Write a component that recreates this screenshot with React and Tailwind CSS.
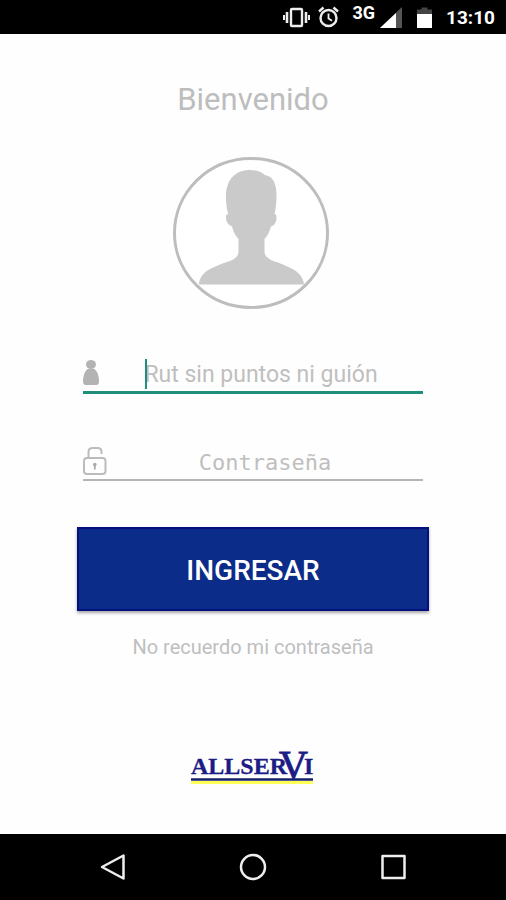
import React from "react";

function StatusBar() {
  return (
    <header className="flex h-[34px] items-center justify-end bg-black pr-[11px] text-white">
      <svg className="mr-[6px] h-[22px] w-[28px]" viewBox="0 0 28 22" fill="none" stroke="#eee" aria-hidden="true">
        <rect x="8" y="3" width="11" height="17" rx="1" strokeWidth="2.4" />
        <path d="M4 6v11M23 6v11" strokeWidth="2.600" />
        <path d="M1 9v5M26 9v5" strokeWidth="2" />
      </svg>
      <svg className="mr-[13px] h-[22px] w-[22px]" viewBox="0 0 22 22" fill="none" stroke="#eee" aria-hidden="true">
        <circle cx="11.500" cy="12" r="8" strokeWidth="2.4" />
        <path d="M11.500 7.500v5l3.500 2.200" strokeWidth="1.800" />
        <path d="M2 5.500l4.500-4M21 5.500l-4.500-4" strokeWidth="2.400" />
      </svg>
      <span className="mr-[5px] self-start pt-[3px] font-['Roboto',sans-serif] text-[18px] font-bold leading-[20px]">3G</span>
      <svg className="mr-[15px] h-[22px] w-[22px]" viewBox="0 0 22 22" aria-hidden="true">
        <path d="M22 1v21H0z" fill="#555" />
        <path d="M16 7V22H0z" fill="#fff" />
      </svg>
      <svg className="mr-[14px] h-[22px] w-[15px]" viewBox="0 0 15 22" aria-hidden="true">
        <path d="M4.500 1.500h6v2H15V8H0V3.500h4.500z" fill="#444" />
        <path d="M0 8h15v14H0z" fill="#fff" />
      </svg>
      <span className="pt-[2px] font-['Roboto',sans-serif] text-[19px] font-bold leading-[24px]">13:10</span>
    </header>
  );
}

function Avatar() {
  return (
    <svg className="mr-[4px] mt-[36px] h-[154px] w-[158px]" viewBox="0 0 158 154" role="img" aria-label="Usuario">
      <ellipse cx="79" cy="77" rx="76.500" ry="74.500" fill="#fff" stroke="#bdbdbd" strokeWidth="3" />
      <path
        d="M27 128.500c0-7 5-13 13-16.500 5-2.500 12-5 18-7 5-2 8.500-5 8.500-9V83c-3-3-5-7-6.500-12.500-4-1.500-6-5-6-9.500 0-2 .8-3 2.300-3-1.800-5-2.300-12-2.300-18 0-16 9-26 24-26 6 0 11 1.500 15 5 9 1.500 11.500 10 11.500 21 0 6-.5 12-2 18 1.500 0 2 1.500 2 3.500 0 4.500-2 8-5.500 9-1.500 5.500-3.500 9.500-6.500 12.500v13c0 4 4 7 9 9 6 2 12 4.500 17 7 8 3.500 13 9.500 13.500 16.500z"
        fill="#cacaca"
      />
    </svg>
  );
}

function PersonIcon() {
  return (
    <svg className="h-[28px] w-[16px] shrink-0" viewBox="0 0 16 28" fill="#b3b3b3" aria-hidden="true">
      <ellipse cx="8" cy="5.500" rx="5" ry="4.500" />
      <path d="M4.500 10h7c3 2.500 4.500 7 4.500 12 0 3-1 4-3 4H3c-2 0-3-1-3-4 0-5 1.500-9.500 4.500-12z" />
    </svg>
  );
}

function PadlockIcon() {
  return (
    <svg className="h-[30px] w-[24px] shrink-0" viewBox="0 0 24 30" fill="none" stroke="#bcbcbc" strokeWidth="2" aria-hidden="true">
      <rect x="1" y="12" width="21.500" height="16" rx="3" />
      <path d="M5.500 12V6c0-2.500 1.500-4 4-4h5c2.500 0 4 1.500 4 4v2" />
      <circle cx="11.800" cy="18.500" r="1.800" fill="#aaa" stroke="none" />
      <path d="M11.800 18.500v5" stroke="#aaa" strokeWidth="1.800" />
    </svg>
  );
}

function Logo() {
  return (
    <svg
      className="h-[50px] w-[150px] font-['Liberation_Serif',serif]"
      viewBox="0 0 150 50"
      role="img"
      aria-label="ALLSERVI"
    >
      <path d="M13 40.500h122" stroke="#ffff55" strokeWidth="3" />
      <path d="M13 37.500h122" stroke="#17206b" strokeWidth="2.500" />
      <g fill="#1c1c86" stroke="#1c1c86">
        <text x="13" y="32" fontSize="24" fontWeight="700" strokeWidth="0.300">ALLSER</text>
        <text x="101" y="36" fontSize="40" strokeWidth="0.900">V</text>
        <text x="126" y="32" fontSize="24" fontWeight="700" strokeWidth="0.300">I</text>
      </g>
    </svg>
  );
}

function NavigationBar() {
  return (
    <nav className="flex h-[66px] items-center justify-center gap-[112px] bg-black" aria-label="Sistema">
      <button type="button" aria-label="Atrás">
        <svg className="h-[28px] w-[28px]" viewBox="0 0 28 28" fill="none" stroke="#eee" strokeWidth="2.500" strokeLinejoin="round">
          <path d="M24.500 2.500v23L3 14z" />
        </svg>
      </button>
      <button type="button" aria-label="Inicio">
        <svg className="h-[28px] w-[28px]" viewBox="0 0 28 28" fill="none" stroke="#eee" strokeWidth="2.500">
          <circle cx="14" cy="14" r="12" />
        </svg>
      </button>
      <button type="button" aria-label="Recientes">
        <svg className="h-[28px] w-[28px]" viewBox="0 0 28 28" fill="none" stroke="#eee" strokeWidth="2.500" strokeLinejoin="round">
          <rect x="3.500" y="3" width="22" height="22" />
        </svg>
      </button>
    </nav>
  );
}

export default function App() {
  return (
    <div className="flex min-h-screen flex-col bg-[#fefefe] font-['Roboto',sans-serif]">
      <StatusBar />
      <main className="flex flex-1 flex-col items-center px-[77px]">
        <h1 className="mt-[46px] text-[31px] font-normal leading-[40px] text-[#bdbdbd]">Bienvenido</h1>
        <Avatar />
        <form className="flex w-full flex-col" onSubmit={(event) => event.preventDefault()}>
          <div className="mx-[6px] mt-[44px] flex h-[40px] items-center border-b-3 border-[#1f8f7c]">
            <label htmlFor="rut" aria-label="Rut">
              <PersonIcon />
            </label>
            <div className="relative flex min-w-0 flex-1">
              <input
                id="rut"
                type="text"
                placeholder="Rut sin puntos ni guión"
                className="h-[36px] w-full min-w-0 bg-transparent pt-[4px] text-center text-[23px] text-[#555] outline-none placeholder:text-[#bfbfbf]"
              />
              <span className="absolute left-1/2 top-[4px] -ml-[116px] h-[30px] w-[2px] bg-[#1f8f7c]" />
            </div>
          </div>
          <div className="mx-[6px] mt-[48px] flex h-[39px] items-center border-b-2 border-[#b5b5b5]">
            <label htmlFor="password" aria-label="Contraseña">
              <PadlockIcon />
            </label>
            <input
              id="password"
              type="password"
              placeholder="Contraseña"
              className="h-[36px] min-w-0 flex-1 bg-transparent pt-[4px] text-center font-['DejaVu_Sans_Mono',monospace] text-[22px] text-[#555] outline-none placeholder:text-[#bfbfbf]"
            />
          </div>
          <button
            type="submit"
            className="mt-[46px] h-[84px] border-2 border-[#06107c] bg-[#0b2c88] pt-[4px] text-[28px] font-medium text-white shadow-[0_2px_3px_rgba(0,0,0,0.35)]"
          >
            INGRESAR
          </button>
        </form>
        <a href="#recuperar" className="mt-[24px] text-[20px] leading-[24px] text-[#bfbfbf]">
          No recuerdo mi contraseña
        </a>
        <div className="mt-[83px]">
          <Logo />
        </div>
      </main>
      <NavigationBar />
    </div>
  );
}
